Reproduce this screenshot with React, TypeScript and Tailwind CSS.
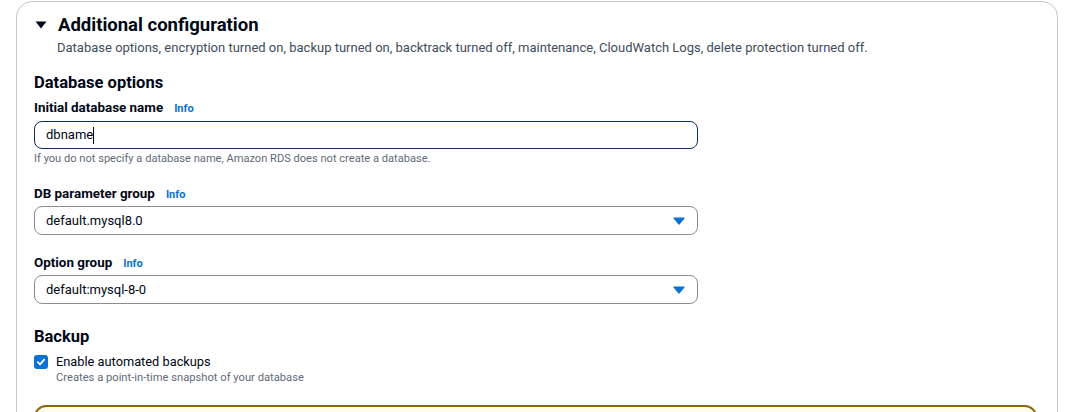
import React from "react";

function Info() {
  return <span className="ml-[11px] text-[11px] font-bold text-[#0972d3]">Info</span>;
}

function Caret() {
  return (
    <svg width="12" height="8" viewBox="0 0 12 8" className="block">
      <path d="M1 1 L11 1 L6 7 Z" fill="#0972d3" stroke="#0972d3" strokeWidth="1.2" strokeLinejoin="round" />
    </svg>
  );
}

function Select({ value }: { value: string }) {
  return (
    <div className="w-[664px] h-[29px] border border-[#8c8c94] rounded-[8px] flex items-center justify-between pl-[11px] pr-[12px] text-[13px] text-[#000716]">
      <span>{value}</span>
      <Caret />
    </div>
  );
}

export default function App() {
  return (
    <div className="w-[1068px] h-[412px] overflow-hidden bg-white pt-px pl-4" style={{ fontFamily: 'Roboto, "Noto Sans", sans-serif' }}>
      <div className="w-[1042px] h-[460px] border border-[#c6c6cd] rounded-[16px] pl-[17px] pr-[20px] pt-[12px]">
        <div className="flex items-center">
          <svg width="12" height="8" viewBox="0 0 12 8" className="ml-[1px] mr-[11px]">
            <path d="M0.5 0.5 L11.5 0.5 L6 7.5 Z" fill="#000716" />
          </svg>
          <span className="text-[18.5px] font-bold text-[#000716] leading-[22px]">Additional configuration</span>
        </div>
        <div className="pl-[23px] text-[13px] text-[#414d5c] leading-[18px] mt-[3px]">
          Database options, encryption turned on, backup turned on, backtrack turned off, maintenance, CloudWatch Logs, delete protection turned off.
        </div>

        <div className="mt-[16px] text-[16.5px] font-bold text-[#000716] leading-[20px]">Database options</div>
        <div className="mt-[6px] flex items-baseline text-[13.4px] font-bold text-[#000716] leading-[18px]">
          Initial database name<Info />
        </div>
        <div className="mt-[3px] w-[664px] h-[28px] border border-[#0f2e5c] rounded-[8px] flex items-center pl-[11px] text-[13px] text-[#000716]">
          dbname<span className="inline-block w-px h-[17px] bg-[#000716]"></span>
        </div>
        <div className="mt-[2px] text-[11.1px] text-[#5f6b7a] leading-[16px]">
          If you do not specify a database name, Amazon RDS does not create a database.
        </div>

        <div className="mt-[18px] flex items-baseline text-[13.4px] font-bold text-[#000716] leading-[18px]">
          DB parameter group<Info />
        </div>
        <div className="mt-[2px]">
          <Select value="default.mysql8.0" />
        </div>

        <div className="mt-[19px] flex items-baseline text-[13.4px] font-bold text-[#000716] leading-[18px]">
          Option group<Info />
        </div>
        <div className="mt-[2px]">
          <Select value="default:mysql-8-0" />
        </div>

        <div className="mt-[23px] text-[16.5px] font-bold text-[#000716] leading-[20px]">Backup</div>
        <div className="mt-[6px] flex items-start">
          <div className="mt-[2px] w-[14px] h-[14px] rounded-[3px] bg-[#0972d3] flex items-center justify-center">
            <svg width="10" height="10" viewBox="0 0 10 10">
              <path d="M1.8 5.2 L4 7.3 L8.2 2.6" fill="none" stroke="white" strokeWidth="1.8" strokeLinecap="round" strokeLinejoin="round" />
            </svg>
          </div>
          <div className="ml-[8px]">
            <div className="text-[12.8px] text-[#000716] leading-[17px]">Enable automated backups</div>
            <div className="text-[11.2px] text-[#5f6b7a] leading-[15px]">Creates a point-in-time snapshot of your database</div>
          </div>
        </div>

        <div className="mt-[20px] h-[60px] border-2 border-[#8d6605] bg-[#fffce9] rounded-[12px]"></div>
      </div>
    </div>
  );
}
